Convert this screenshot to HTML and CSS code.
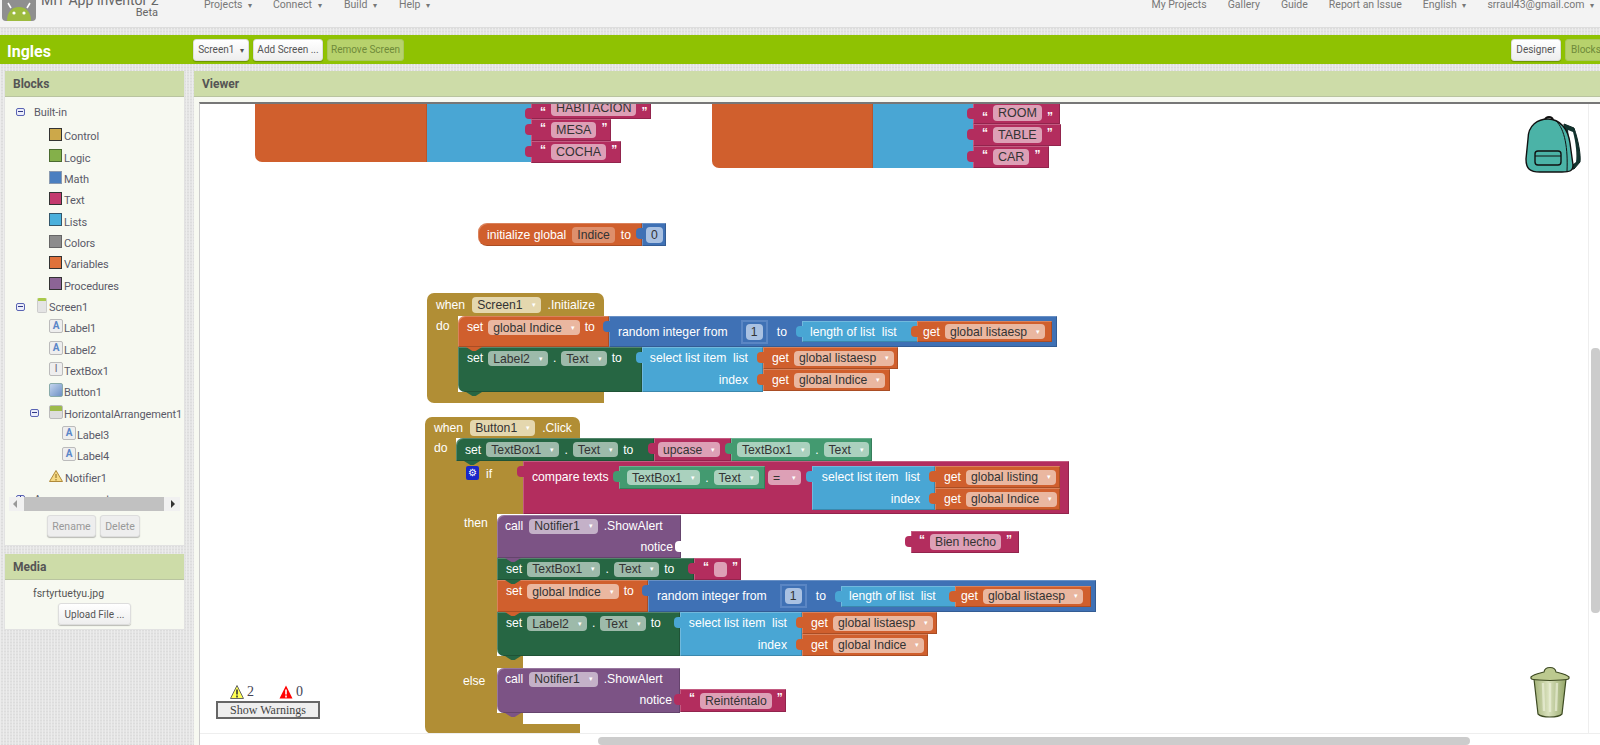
FILE: index.html
```html
<!DOCTYPE html>
<html lang="en">
<head>
    <meta charset="UTF-8">
    <title>MIT App Inventor 2 - Ingles</title>
    <link rel="stylesheet" href="styles.css">
</head>
<body>
<div class="page">
    <header class="topbar">
        <svg class="logo" viewBox="0 0 34 22">
            <rect x="0" y="-12" width="34" height="33" rx="4" fill="#8f8f8f"/>
            <path d="M5 21 C5 11 11 7 17 7 C23 7 29 11 29 21 Z" fill="#9dbb3f"/>
            <path d="M9 8 L6 3 M25 8 L28 3" stroke="#fff" stroke-width="1.6"/>
            <circle cx="12" cy="13" r="1.6" fill="#fff"/>
            <circle cx="22" cy="13" r="1.6" fill="#fff"/>
        </svg>
        <div class="brand">
            <div class="brand-name">MIT App Inventor 2</div>
            <div class="brand-beta">Beta</div>
        </div>
        <nav class="menu menu-left">
            <span class="m-projects">Projects <i>▾</i></span>
            <span class="m-connect">Connect <i>▾</i></span>
            <span class="m-build">Build <i>▾</i></span>
            <span>Help <i>▾</i></span>
        </nav>
        <nav class="menu menu-right">
            <span>My Projects</span>
            <span>Gallery</span>
            <span>Guide</span>
            <span>Report an Issue</span>
            <span>English <i>▾</i></span>
            <span>srraul43@gmail.com <i>▾</i></span>
        </nav>
    </header>
    <div class="strip"></div>
    <div class="toolbar">
        <div class="project">Ingles</div>
        <button class="btn btn-screen">Screen1 <i>▾</i></button>
        <button class="btn btn-add">Add Screen ...</button>
        <button class="btn off btn-remove">Remove Screen</button>
        <button class="btn btn-designer">Designer</button>
        <button class="btn off btn-blocks">Blocks</button>
    </div>
    <div class="strip"></div>

    <div class="main">
        <aside class="side">
            <section class="panel panel-blocks">
                <h2 class="panel-head">Blocks</h2>
                <div class="tree">
                    <div class="row row-root first"><b class="exp"></b><span class="root-label">Built-in</span></div>
                    <div class="row row-cat"><b class="sw c-control"></b>Control</div>
                    <div class="row row-cat"><b class="sw c-logic"></b>Logic</div>
                    <div class="row row-cat"><b class="sw c-math"></b>Math</div>
                    <div class="row row-cat"><b class="sw c-text"></b>Text</div>
                    <div class="row row-cat"><b class="sw c-lists"></b>Lists</div>
                    <div class="row row-cat"><b class="sw c-colors"></b>Colors</div>
                    <div class="row row-cat"><b class="sw c-vars"></b>Variables</div>
                    <div class="row row-cat"><b class="sw c-procs"></b>Procedures</div>
                    <div class="row row-root"><b class="exp"></b><b class="ic-screen"></b>Screen1</div>
                    <div class="row row-cat"><b class="ic ic-a">A</b>Label1</div>
                    <div class="row row-cat"><b class="ic ic-a">A</b>Label2</div>
                    <div class="row row-cat"><b class="ic ic-t">I</b>TextBox1</div>
                    <div class="row row-cat"><b class="ic ic-btn"></b>Button1</div>
                    <div class="row row-arr"><b class="exp"></b><b class="ic ic-arr"></b>HorizontalArrangement1</div>
                    <div class="row row-sub"><b class="ic ic-a">A</b>Label3</div>
                    <div class="row row-sub"><b class="ic ic-a">A</b>Label4</div>
                    <div class="row row-cat">
                        <svg class="ic-warn" viewBox="0 0 14 12"><path d="M7 .5 L13.5 11.5 L.5 11.5 Z" fill="#f5d985" stroke="#b08a3a"/><path d="M7 4 V8 M7 9 V10.5" stroke="#8a6a20"/></svg>Notifier1
                    </div>
                    <div class="row row-root"><b class="exp plus"></b><span class="root-label">Any component</span></div>
                </div>
                <div class="hscroll">
                    <span class="tri-l"></span><span class="hthumb"></span><span class="tri-r"></span>
                </div>
                <div class="tree-btns">
                    <button class="btn off-grey">Rename</button>
                    <button class="btn off-grey">Delete</button>
                </div>
            </section>
            <section class="panel panel-media">
                <h2 class="panel-head">Media</h2>
                <div class="media-file">fsrtyrtuetyu.jpg</div>
                <button class="btn btn-upload">Upload File ...</button>
            </section>
        </aside>

        <section class="panel viewer">
            <h2 class="panel-head">Viewer</h2>
            <div class="canvas">

                <div class="biglist g-list1">
                    <div class="bl-orange w172"></div>
                    <div class="bl-blue w104"></div>
                    <div class="bl-items">
                        <div class="blk text val cut"><u>“</u><span class="f">HABITACIÓN</span><u>”</u></div>
                        <div class="blk text val it"><u>“</u><span class="f">MESA</span><u>”</u></div>
                        <div class="blk text val it"><u>“</u><span class="f">COCHA</span><u>”</u></div>
                    </div>
                </div>
                <div class="biglist g-list2">
                    <div class="bl-orange w161"></div>
                    <div class="bl-blue w100"></div>
                    <div class="bl-items">
                        <div class="blk text val cut cut2"><u>“</u><span class="f">ROOM</span><u>”</u></div>
                        <div class="blk text val it"><u>“</u><span class="f">TABLE</span><u>”</u></div>
                        <div class="blk text val it"><u>“</u><span class="f">CAR</span><u>”</u></div>
                    </div>
                </div>

                <div class="g-global">
                    <div class="blk var pill-left">initialize global <span class="f">Indice</span> to</div>
                    <div class="blk math val num-block"><span class="f fnum">0</span></div>
                </div>

                <div class="group g-init">
                    <div class="hat hat-init">when <span class="f f-tan">Screen1 <i>▾</i></span> .Initialize</div>
                    <div class="body">
                        <div class="arm arm-init">do</div>
                        <div class="stack">
                            <div class="line">
                                <div class="blk var stmt first-st top w151 h31">set <span class="f">global Indice <i>▾</i></span> to</div>
                                <div class="blk math val rnd w448 h31">random integer from <span class="numbox"><span class="f fnum">1</span></span> to
                                    <div class="blk list val len hi">length of list &nbsp;list
                                        <div class="blk var val get w135 hi">get <span class="f">global listaesp <i>▾</i></span></div>
                                    </div>
                                </div>
                            </div>
                            <div class="line">
                                <div class="blk comp stmt top w184 h45 last-st">set <span class="f">Label2 <i>▾</i></span> . <span class="f">Text <i>▾</i></span> to</div>
                                <div class="blk list val select w121 h45">
                                    <div class="sel-row">select list item &nbsp;list</div>
                                    <div class="sel-row">index</div>
                                </div>
                                <div class="gets">
                                    <div class="blk var val w135 hr">get <span class="f">global listaesp <i>▾</i></span></div>
                                    <div class="blk var val w127 hr">get <span class="f">global Indice <i>▾</i></span></div>
                                </div>
                            </div>
                        </div>
                    </div>
                    <div class="foot foot-init"></div>
                </div>

                <div class="group g-click">
                    <div class="hat hat-click">when <span class="f f-tan">Button1 <i>▾</i></span> .Click</div>
                    <div class="body">
                        <div class="arm arm-click">do</div>
                        <div class="stack">
                            <div class="line">
                                <div class="blk comp stmt first-st w198 h23">set <span class="f">TextBox1 <i>▾</i></span> . <span class="f">Text <i>▾</i></span> to</div>
                                <div class="blk text val upcase w77 h23"><span class="f">upcase <i>▾</i></span></div>
                                <div class="blk getter val top-getter w141 h23"><span class="f">TextBox1 <i>▾</i></span> . <span class="f">Text <i>▾</i></span></div>
                            </div>
                            <div class="line">
                                <div class="if-side">
                                    <div class="if-head"><b class="gear">⚙</b>if</div>
                                    <div class="if-then">
                                        <div class="if-label">then</div>
                                    </div>
                                </div>
                                <div class="blk text val compare w546 h53">
                                    <span class="cmp-label">compare texts</span>
                                    <div class="blk getter val inner w146 hc"><span class="f">TextBox1 <i>▾</i></span> . <span class="f">Text <i>▾</i></span></div>
                                    <span class="f fop">= <i>▾</i></span>
                                    <div class="blk list val select inner w123 h44">
                                        <div class="sel-row">select list item &nbsp;list</div>
                                        <div class="sel-row">index</div>
                                    </div>
                                    <div class="gets">
                                        <div class="blk var val w125 hr">get <span class="f">global listing <i>▾</i></span></div>
                                        <div class="blk var val w125 hr">get <span class="f">global Indice <i>▾</i></span></div>
                                    </div>
                                </div>
                            </div>
                        </div>
                    </div>
                    <div class="foot foot-click"></div>
                </div>

                <div class="then-stack">
                    <div class="blk proc stmt first-st top2 w184 h43">
                        <div class="call-line">call <span class="f">Notifier1 <i>▾</i></span> .ShowAlert</div>
                        <div class="notice-line">notice<b class="hole"></b></div>
                    </div>
                    <div class="line">
                        <div class="blk comp stmt w197 h22">set <span class="f">TextBox1 <i>▾</i></span> . <span class="f">Text <i>▾</i></span> to</div>
                        <div class="blk text val w47 h22"><u>“</u><span class="f fempty"></span><u>”</u></div>
                    </div>
                    <div class="line">
                        <div class="blk var stmt top w151 h32">set <span class="f">global Indice <i>▾</i></span> to</div>
                        <div class="blk math val rnd w448 h32">random integer from <span class="numbox"><span class="f fnum">1</span></span> to
                            <div class="blk list val len hi">length of list &nbsp;list
                                <div class="blk var val get w136 hi">get <span class="f">global listaesp <i>▾</i></span></div>
                            </div>
                        </div>
                    </div>
                    <div class="line">
                        <div class="blk comp stmt top w183 h44 last-st">set <span class="f">Label2 <i>▾</i></span> . <span class="f">Text <i>▾</i></span> to</div>
                        <div class="blk list val select w122 h44">
                            <div class="sel-row">select list item &nbsp;list</div>
                            <div class="sel-row">index</div>
                        </div>
                        <div class="gets">
                            <div class="blk var val w135 hr">get <span class="f">global listaesp <i>▾</i></span></div>
                            <div class="blk var val w126 hr">get <span class="f">global Indice <i>▾</i></span></div>
                        </div>
                    </div>
                </div>

                <div class="then-notch"></div>
                <div class="else-side">else</div>
                <div class="else-stack">
                    <div class="blk proc stmt first-st last-st top2 w183 h45">
                        <div class="call-line">call <span class="f">Notifier1 <i>▾</i></span> .ShowAlert</div>
                        <div class="notice-line">notice</div>
                    </div>
                    <div class="blk text val w106 h23 reint"><u>“</u><span class="f">Reinténtalo</span><u>”</u></div>
                </div>

                <div class="blk text val bien w108 h22"><u>“</u><span class="f">Bien hecho</span><u>”</u></div>

                <div class="warnings">
                    <div class="warn-counts">
                        <svg class="tri" viewBox="0 0 14 14"><path d="M7 .5 L13.5 13.5 L.5 13.5 Z" fill="#ffff55" stroke="#666"/><path d="M7 4.5 V9.5 M7 10.5 V12.5" stroke="#333" stroke-width="1.6"/></svg>
                        <span class="cnt">2</span>
                        <svg class="tri tri2" viewBox="0 0 14 14"><path d="M7 .5 L13.5 13.5 L.5 13.5 Z" fill="#f00"/><path d="M7 4.5 V9.5 M7 10.5 V12.5" stroke="#fff" stroke-width="1.6"/></svg>
                        <span class="cnt">0</span>
                    </div>
                    <button class="warn-btn">Show Warnings</button>
                </div>

                <svg class="backpack" viewBox="0 0 58 59">
                    <path d="M40 9 L50 13 C54 24 57 40 56 47 L50 54 L44 54 Z" fill="#12342f" stroke="#0d2522"/>
                    <path d="M44 15 L49 17 C52 28 53 40 52 47 L48 50 Z" fill="#fff"/>
                    <path d="M21 5 C22 1 28 1 29 5" fill="none" stroke="#111" stroke-width="2"/>
                    <path d="M4 24 C4 10 14 4 24 4 C36 4 44 14 46 28 L49 50 C49 56 46 57 38 57 L16 57 C6 57 2 54 2 44 Z" fill="#4bb3a7" stroke="#111" stroke-width="1.4"/>
                    <path d="M32 6 C41 14 44 34 43 56" fill="none" stroke="#111" stroke-width="1"/>
                    <rect x="11" y="36" width="26" height="14" rx="3" fill="#4bb3a7" stroke="#111" stroke-width="1.4"/>
                    <path d="M11 41 H37" stroke="#111" stroke-width="1"/>
                </svg>
                <svg class="trash" viewBox="0 0 40 54">
                    <defs>
                        <linearGradient id="can" x1="0" x2="1" y1="0" y2="0">
                            <stop offset="0" stop-color="#a3b278"/>
                            <stop offset=".45" stop-color="#d9e1bd"/>
                            <stop offset="1" stop-color="#94a668"/>
                        </linearGradient>
                    </defs>
                    <path d="M4 14 L8 49 C12 53 28 53 32 49 L36 14 Z" fill="url(#can)" stroke="#3d4a22" stroke-width="1.2"/>
                    <path d="M13 18 L14 46 M20 18 V47 M27 18 L26 46" stroke="#eef2dc" stroke-width="2.4" opacity=".65"/>
                    <path d="M1 12 C4 9 11 8 14 7 C15 1 25 1 26 7 C29 8 36 9 39 12 C39.500 14.500 38 15 20 15.500 C2 15 .5 14.500 1 12 Z" fill="#bcc98f" stroke="#3d4a22" stroke-width="1.2"/>
                </svg>

                <div class="vscroll"><span class="vthumb"></span></div>
                <div class="hbar"><span class="hbar-thumb"></span></div>
            </div>
        </section>
    </div>
</div>
</body>
</html>
```

FILE: styles.css
```css
* {
    box-sizing: border-box;
}
html, body {
    margin: 0;
    height: 745px;
    overflow: hidden;
}
body {
    font-family: Roboto, "Liberation Sans", sans-serif;
    font-size: 12px;
    color: #555;
    background: #e4e4e4;
}
.page {
    display: flex;
    flex-direction: column;
    height: 745px;
}
i {
    font-style: normal;
    font-size: 8px;
}

/* top menu, scrolled a little off the top */
.topbar {
    display: flex;
    height: 28px;
    flex: none;
    background: #f3f3f3;
    border-bottom: 1px solid #ddd;
    overflow: hidden;
}
.logo {
    width: 34px;
    height: 22px;
    margin-left: 2px;
    flex: none;
}
.brand {
    width: 122px;
    margin-left: 5px;
    color: #666;
}
.brand-name {
    font-size: 14px;
    line-height: 14px;
    margin-top: -7px;
    white-space: nowrap;
}
.brand-beta {
    font-size: 11px;
    line-height: 12px;
    margin-top: 0;
    text-align: right;
    padding-right: 5px;
}
.menu {
    display: flex;
    margin-top: -3px;
    line-height: 16px;
    color: #777;
    font-size: 10.5px;
    white-space: nowrap;
}
.menu i {
    margin-left: 3px;
}
.menu-left {
    margin-left: 41px;
}
.m-projects { width: 69px; }
.m-connect { width: 71px; }
.m-build { width: 55px; }
.menu-right {
    margin-left: auto;
    gap: 21px;
    padding-right: 6px;
}

.strip, .main {
    background-color: #e4e4e4;
    background-image: repeating-linear-gradient(90deg, #ececec 0 1px, transparent 1px 3px), repeating-linear-gradient(0deg, #dcdcdc 0 1px, transparent 1px 3px);
}
.strip {
    height: 7px;
    flex: none;
}

.toolbar {
    display: flex;
    align-items: center;
    height: 29px;
    flex: none;
    background: #8fc202;
    padding-left: 7px;
    overflow: hidden;
}
.project {
    width: 186px;
    color: #fff;
    font-weight: bold;
    font-size: 16px;
    padding-top: 3px;
}
.btn {
    height: 22px;
    padding: 0;
    border: 1px solid #ddd;
    border-radius: 3px;
    background: linear-gradient(#fff, #eee);
    color: #555;
    font-family: inherit;
    font-size: 10px;
    box-shadow: 0 1px 1px rgba(0, 0, 0, .25);
    white-space: nowrap;
}
.btn i {
    margin-left: 3px;
}
.btn.off {
    background: #b7d26c;
    border-color: #a9c660;
    color: #6f8a3a;
    box-shadow: none;
}
.btn-screen { width: 56px; }
.btn-add { width: 70px; margin-left: 4px; }
.btn-remove { width: 77px; margin-left: 4px; }
.btn-designer { width: 50px; margin-left: auto; }
.btn-blocks { width: 40px; margin-left: 4px; margin-right: -5px; text-align: left; padding-left: 5px; }

.main {
    display: flex;
    flex: 1;
    gap: 9px;
    padding-left: 4px;
    min-height: 0;
}
.side {
    width: 181px;
    flex: none;
    display: flex;
    flex-direction: column;
    gap: 8px;
}
.panel {
    background: #f7f9f1;
    border: 1px solid #e2e2e2;
    border-top: 0;
}
.panel-head {
    margin: 0;
    height: 26px;
    line-height: 26px;
    padding-left: 8px;
    background: #cddca8;
    border-bottom: 1px solid #b9c4a0;
    font-size: 12px;
    font-weight: bold;
    color: #555;
    text-align: left;
}
.panel-blocks {
    height: 475px;
}
.tree {
    height: 400px;
    overflow: hidden;
}
.row {
    display: flex;
    align-items: center;
    height: 21.33px;
    white-space: nowrap;
    color: #5a5a68;
    font-size: 11px;
    letter-spacing: -.1px;
}
.row.first {
    margin-top: 5px;
    margin-bottom: 3px;
}
.row-root { padding-left: 11px; }
.row-cat { padding-left: 44px; }
.row-arr { padding-left: 25px; }
.row-sub { padding-left: 57px; }
.root-label { margin-left: 9px; }
.exp {
    position: relative;
    width: 9px;
    height: 8px;
    margin-top: -2px;
    border: 1px solid #5a64b4;
    border-radius: 2px;
    background: #eceefa;
    flex: none;
}
.exp::after {
    content: "";
    position: absolute;
    left: 1px;
    right: 1px;
    top: 2px;
    height: 1px;
    background: #333a88;
}
.exp.plus::before {
    content: "";
    position: absolute;
    left: 3px;
    top: 0;
    bottom: 0;
    width: 1px;
    background: #333a88;
}
.sw {
    width: 13px;
    height: 13px;
    margin-top: -5px;
    margin-right: 2px;
    border: 1px solid #333;
    flex: none;
}
.c-control { background: #cca84a; }
.c-logic { background: #84b04a; border-color: #4a6a30; }
.c-math { background: #4a7fc0; border-color: #8a9ab0; }
.c-text { background: #c43a6e; }
.c-lists { background: #4ab0dc; border-color: #33566a; }
.c-colors { background: #8c8c8c; border-color: #666; }
.c-vars { background: #e0713a; }
.c-procs { background: #8c6496; }
.ic-screen {
    width: 10px;
    height: 15px;
    margin: -4px 2px 0 12px;
    border: 1px solid #ccc;
    border-top: 3px solid #a9c94a;
    border-radius: 2px;
    background: #e4e4e4;
    flex: none;
}
.ic {
    width: 14px;
    height: 14px;
    margin-top: -5px;
    margin-right: 1px;
    border: 1px solid #bbb;
    border-radius: 2px;
    background: #eee;
    color: #5a86c8;
    font-size: 10px;
    line-height: 12px;
    text-align: center;
    flex: none;
}
.row-arr .ic {
    margin-left: 10px;
}
.ic-t {
    color: #667;
    font-weight: normal;
}
.ic-btn {
    background: linear-gradient(135deg, #c3d4ee, #6d90c4);
    border-color: #8aa;
}
.ic-arr {
    background: linear-gradient(#9dbb4a 0 5px, #ddd 5px);
}
.ic-warn {
    width: 14px;
    height: 12px;
    margin-top: -5px;
    margin-right: 2px;
    flex: none;
}
.hscroll {
    display: flex;
    align-items: center;
    height: 14px;
    margin: 0 4px;
    background: #f1f1f1;
}
.tri-l, .tri-r {
    width: 15px;
    flex: none;
    height: 0;
    border-top: 4px solid transparent;
    border-bottom: 4px solid transparent;
}
.tri-l {
    width: 0;
    margin: 0 7px 0 4px;
    border-right: 4px solid #999;
}
.tri-r {
    width: 0;
    margin: 0 5px 0 7px;
    border-left: 4px solid #333;
}
.hthumb {
    flex: 1;
    height: 14px;
    background: #c1c1c1;
}
.tree-btns {
    display: flex;
    justify-content: center;
    gap: 4px;
    margin-top: 4px;
    padding-right: 2px;
}
.off-grey {
    background: #eee;
    color: #999;
    height: 22px;
    font-size: 10.5px;
    padding: 0 4px;
    width: 49px;
}
.off-grey + .off-grey {
    width: 40px;
}
.panel-media {
    height: 76px;
}
.media-file {
    padding-left: 28px;
    margin-top: 6px;
    line-height: 15px;
    font-size: 10.5px;
}
.btn-upload {
    display: block;
    width: 73px;
    margin: 2px 0 0 53px;
}
.viewer {
    flex: 1;
    min-width: 0;
    display: flex;
    flex-direction: column;
    border: 0;
}
.viewer .panel-head {
    flex: none;
}

/* the blocks workspace, a free canvas */
.canvas {
    position: relative;
    flex: 1;
    margin: 5px 0 0 5px;
    background: #fff;
    border-top: 2px solid #777;
    border-left: 1px solid #ccc;
    overflow: hidden;
    font-family: "Liberation Sans", Arial, sans-serif;
    color: #fff;
    font-size: 12.2px;
}
.blk {
    --c: #888;
    position: relative;
    display: flex;
    align-items: center;
    gap: 5px;
    padding: 0 5px 0 9px;
    background: var(--c);
    white-space: nowrap;
    flex: none;
    box-shadow: inset 1px 1px rgba(255, 255, 255, .22), inset -1px -1px rgba(0, 0, 0, .18);
}
.var { --c: #d05f2d; }
.math { --c: #3f71b5; }
.list { --c: #49a6d4; }
.text { --c: #b32d5e; }
.comp { --c: #266643; }
.getter { --c: #439a70; }
.proc { --c: #7c5385; }

.val::before {
    content: "";
    position: absolute;
    left: -6px;
    top: 5px;
    width: 7px;
    height: 11px;
    border-radius: 4px 0 0 4px;
    background: var(--c);
}
.stmt::after {
    content: "";
    position: absolute;
    left: 8px;
    bottom: -4px;
    width: 16px;
    height: 4px;
    background: var(--c);
    clip-path: polygon(0 0, 100% 0, 60% 100%, 40% 100%);
    z-index: 2;
}
.first-st {
    border-top-left-radius: 7px;
}
.last-st {
    border-bottom-left-radius: 7px;
}
.top {
    align-items: flex-start;
    padding-top: 4px;
}
.f {
    display: inline-flex;
    align-items: center;
    justify-content: space-between;
    gap: 9px;
    height: 15px;
    padding: 0 5px;
    border-radius: 4px;
    background: rgba(255, 255, 255, .55);
    color: #333;
    font-size: 12.2px;
    flex: none;
}
.f i {
    color: #fff;
    font-size: 7px;
}
.f-tan {
    background: #e4d7ae;
}
.fnum {
    background: #a9c1e2;
    height: 16px;
}
.fempty {
    width: 13px;
}
.rnd {
    gap: 6px;
}
.numbox {
    display: inline-flex;
    align-items: center;
    justify-content: center;
    width: 27px;
    height: 24px;
    margin: 0 3px 0 7px;
    border: 2px solid #5a86c4;
    background: #3f71b5;
}
.len {
    width: 250px;
    margin-left: 9px;
    padding: 0 0 0 8px;
}
.len .get {
    margin-left: auto;
    padding-left: 6px;
}
.upcase {
    padding-left: 4px;
}
.top-getter {
    padding-left: 6px;
}
u {
    text-decoration: none;
    font-size: 12px;
    font-weight: bold;
    margin-top: -5px;
}

/* widths and heights measured on the blocks */
.w77 { width: 77px; }
.w47 { width: 47px; }
.w100 { width: 100px; }
.w104 { width: 104px; }
.w106 { width: 106px; }
.w108 { width: 108px; }
.w121 { width: 121px; }
.w122 { width: 122px; }
.w123 { width: 123px; }
.w125 { width: 125px; }
.w126 { width: 126px; }
.w127 { width: 127px; }
.w135 { width: 135px; }
.w136 { width: 136px; }
.w141 { width: 141px; }
.w146 { width: 146px; }
.w151 { width: 151px; }
.w161 { width: 161px; }
.w172 { width: 172px; }
.w183 { width: 183px; }
.w184 { width: 184px; }
.w197 { width: 197px; }
.w198 { width: 198px; }
.w448 { width: 448px; }
.w546 { width: 546px; }
.h22 { height: 22px; }
.h23 { height: 23px; }
.h31 { height: 31px; }
.h32 { height: 32px; }
.h43 { height: 43px; }
.h44 { height: 44px; }
.h45 { height: 45px; }
.h53 { height: 53px; }
.hi { height: 21px; }
.hr { height: 22px; }
.hc { height: 23px; }

.line {
    display: flex;
}
.gets {
    display: flex;
    flex-direction: column;
    flex: none;
}
.select {
    display: block;
    padding: 0 15px 0 0;
}
.sel-row {
    height: 22px;
    line-height: 22px;
    text-align: right;
}

/* old list blocks cut by the top of the canvas */
.biglist {
    position: absolute;
    display: flex;
    height: 59px;
}
.g-list1 {
    left: 55px;
    top: -1px;
}
.g-list2 {
    left: 512px;
    top: -1px;
    height: 65px;
}
.bl-orange {
    background: #d05f2d;
    border-bottom-left-radius: 7px;
    border-right: 1px solid #b9552a;
}
.bl-blue {
    background: #49a6d4;
}
.bl-items {
    display: flex;
    flex-direction: column;
    align-items: flex-start;
}
.it {
    height: 22px;
}
.cut {
    height: 16px;
    align-items: flex-end;
}
.cut2 {
    height: 21px;
}
.bl-items .f {
    height: 16px;
    padding: 0 5px;
    font-size: 12.5px;
}
.bl-items .cut .f {
    margin-bottom: 3px;
}
.g-list1 .cut { width: 120px; }
.g-list1 .it:nth-child(2) { width: 80px; }
.g-list1 .it:nth-child(3) { width: 90px; }
.g-list2 .cut { width: 87px; }
.g-list2 .it:nth-child(2) { width: 88px; }
.g-list2 .it:nth-child(3) { width: 76px; }

.g-global {
    position: absolute;
    left: 278px;
    top: 119px;
    display: flex;
    height: 23px;
}
.pill-left {
    width: 164px;
    height: 23px;
    border-radius: 9px 0 0 9px;
    padding-left: 9px;
}
.pill-left .f {
    padding: 0 5px;
    height: 16px;
    margin: 0 1px;
    background: rgba(255, 255, 255, .3);
}
.num-block {
    width: 24px;
    padding: 0 4px;
    height: 23px;
}

/* event blocks */
.group {
    position: absolute;
}
.g-init {
    left: 227px;
    top: 189px;
}
.g-click {
    left: 225px;
    top: 313px;
}
.hat {
    display: flex;
    align-items: center;
    background: #b18e35;
    border-radius: 7px 7px 0 0;
    padding-left: 9px;
    gap: 7px;
    white-space: nowrap;
}
.hat-init {
    width: 177px;
    height: 23px;
}
.hat-click {
    width: 155px;
    height: 21px;
}
.hat .f {
    height: 16px;
}
.body {
    display: flex;
}
.arm {
    width: 31px;
    flex: none;
    background: #b18e35;
    padding: 2px 0 0 9px;
    line-height: 16px;
}
.foot {
    height: 11px;
    background: #b18e35;
    border-radius: 0 0 0 7px;
}
.foot-init { width: 177px; }
.foot-click { width: 155px; height: 10px; }

.if-side {
    width: 67px;
    flex: none;
}
.if-head {
    display: flex;
    align-items: flex-start;
    gap: 7px;
    height: 53px;
    background: #b18e35;
    padding: 5px 0 0 10px;
    line-height: 16px;
}
.gear {
    width: 13px;
    height: 14px;
    background: #1a27c8;
    border-radius: 2px;
    font-size: 10px;
    line-height: 14px;
    text-align: center;
    font-weight: normal;
}
.if-then {
    width: 41px;
    height: 210px;
    background: #b18e35;
}
.if-label {
    padding: 1px 0 0 8px;
    line-height: 16px;
}
.compare {
    align-items: flex-start;
    padding: 5px 0 0 9px;
    gap: 0;
}
.cmp-label {
    width: 87px;
    line-height: 22px;
}
.compare .inner {
    margin-right: 3px;
    gap: 5px;
}
.compare .getter {
    padding-left: 8px;
}
.compare .select {
    padding-right: 15px;
    margin-right: 0;
}
.fop {
    width: 33px;
    margin: 4px 11px 0 0;
}

.then-stack, .else-stack {
    position: absolute;
    left: 297px;
}
.then-stack {
    top: 411px;
}
.top2 {
    display: block;
    padding: 0;
}
.call-line {
    display: flex;
    align-items: center;
    gap: 6px;
    height: 22px;
    padding-left: 8px;
}
.notice-line {
    position: relative;
    text-align: right;
    padding-right: 8px;
    line-height: 20px;
}
.hole {
    position: absolute;
    right: 0;
    top: 4px;
    width: 6px;
    height: 11px;
    background: #fff;
    border-radius: 4px 0 0 4px;
}
.then-notch {
    position: absolute;
    left: 297px;
    top: 552px;
    width: 26px;
    height: 12px;
    background: #b18e35;
}
.else-side {
    position: absolute;
    left: 256px;
    top: 564px;
    width: 41px;
    height: 56px;
    padding: 5px 0 0 7px;
    background: #b18e35;
    line-height: 16px;
}
.else-stack {
    top: 564px;
    width: 300px;
    height: 56px;
    background: linear-gradient(#fff 0 45px, #b18e35 45px) 0 0 / 26px 100% no-repeat;
}
.reint {
    position: absolute;
    left: 183px;
    top: 21px;
    padding-left: 9px;
}
.bien {
    position: absolute;
    left: 711px;
    top: 427px;
    padding-left: 8px;
}
.canvas .reint .f, .canvas .bien .f {
    padding: 0 5px;
    height: 16px;
}

/* warnings indicator */
.warnings {
    position: absolute;
    left: 16px;
    top: 579px;
    color: #333;
    font-family: "Liberation Serif", serif;
}
.warn-counts {
    display: flex;
    align-items: center;
    height: 18px;
    padding-left: 14px;
    font-size: 14px;
}
.tri {
    width: 14px;
    height: 14px;
    flex: none;
}
.cnt {
    margin-left: 3px;
    width: 32px;
    color: #445;
}
.warn-btn {
    display: block;
    width: 104px;
    height: 18px;
    padding: 0;
    border: 2px solid #666;
    background: #eee;
    color: #444;
    font-family: "Liberation Serif", serif;
    font-size: 12px;
}
.backpack {
    position: absolute;
    left: 1324px;
    top: 11px;
    width: 58px;
    height: 59px;
}
.trash {
    position: absolute;
    left: 1330px;
    top: 561px;
    width: 40px;
    height: 54px;
}
.vscroll {
    position: absolute;
    right: 0;
    top: 0;
    bottom: 0;
    width: 12px;
    background: #fff;
    border-left: 1px solid #eee;
}
.vthumb {
    position: absolute;
    right: 0;
    top: 244px;
    width: 9px;
    height: 265px;
    background: #ccc;
    border-radius: 4px;
}
.hbar {
    position: absolute;
    left: 0;
    right: 0;
    bottom: 0;
    height: 12px;
    background: #fff;
    border-top: 1px solid #eee;
}
.hbar-thumb {
    position: absolute;
    left: 398px;
    bottom: 0;
    width: 872px;
    height: 8px;
    background: #ccc;
    border-radius: 4px;
}
```
